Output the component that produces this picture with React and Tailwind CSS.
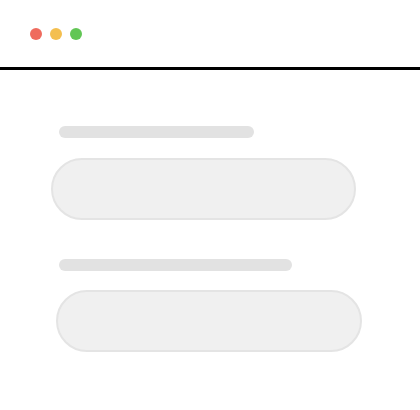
export default function App() {
  return (
    <div className="w-[420px] h-[410px] bg-white overflow-hidden">
      {/* Window header */}
      <div className="h-[70px] flex items-center gap-2 pl-[30px] border-b-[3px] border-black">
        <span className="w-3 h-3 rounded-full bg-[#ef6b5e]" />
        <span className="w-3 h-3 rounded-full bg-[#f4bf4f]" />
        <span className="w-3 h-3 rounded-full bg-[#62c655]" />
      </div>

      {/* Skeleton form */}
      <div className="flex flex-col items-start pt-[56px]">
        <div className="ml-[59px] w-[195px] h-3 rounded-full bg-[#e2e2e2]" />
        <div className="mt-[20px] ml-[51px] w-[305px] h-[62px] rounded-full bg-[#f0f0f0] border-2 border-[#e4e4e4]" />
        <div className="mt-[39px] ml-[59px] w-[233px] h-3 rounded-full bg-[#e2e2e2]" />
        <div className="mt-[19px] ml-[56px] w-[306px] h-[62px] rounded-full bg-[#f0f0f0] border-2 border-[#e4e4e4]" />
      </div>
    </div>
  );
}
